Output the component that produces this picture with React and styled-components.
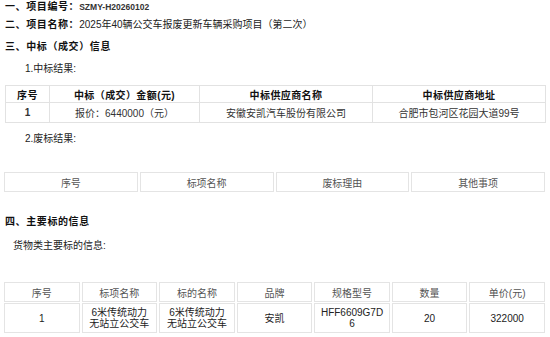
import React from "react";
import styled, { createGlobalStyle } from "styled-components";

const Global = createGlobalStyle`
  html, body { margin: 0; padding: 0; background: #fff; }
  body { font-family: "Liberation Sans", "Noto Sans CJK SC", sans-serif; font-size: 10px; color: #333; }
`;

const Page = styled.div`
  width: 550px;
  height: 337px;
  overflow: hidden;
  padding: 0 0 0 5px;
  box-sizing: border-box;
`;

const Line = styled.div`
  height: ${(p) => p.$h || 22}px;
  line-height: ${(p) => p.$h || 22}px;
  margin-top: ${(p) => p.$mt || 0}px;
  padding-left: ${(p) => p.$indent || 0}px;
  white-space: nowrap;
  color: #222;
`;

const Label = styled.span`
  font-weight: 700;
  color: #111;
  letter-spacing: 0.6px;
`;

const Code = styled.span`
  font-size: 8.5px;
  font-weight: 700;
  color: #333;
`;

const Table1 = styled.table`
  margin-top: 5px;
  width: 540px;
  table-layout: fixed;
  border-collapse: collapse;
  td, th {
    border: 1px solid #e2e2e2;
    text-align: center;
    padding: 0;
    font-size: 10px;
  }
  th { height: 16px; font-weight: 700; color: #111; letter-spacing: 0.4px; }
  td { height: 19px; color: #333; }
`;

const Grid = styled.table`
  margin-top: ${(p) => p.$mt}px;
  margin-left: -3px;
  width: 545px;
  table-layout: fixed;
  border-collapse: separate;
  border-spacing: 2px 1px;
  td {
    border: 1px solid #e4e4e4;
    text-align: center;
    padding: 0;
    font-size: 10px;
    color: #555;
  }
`;

const HeadCell = styled.td`
  height: 18px;
`;

const BodyCell = styled.td`
  height: 28px;
  line-height: 11px;
  && { color: #222; }
`;

export default function App() {
  return (
    <Page>
      <Global />
      <Line $h={14}>
        <Label>一、项目编号：</Label>
        <Code>SZMY-H20260102</Code>
      </Line>
      <Line>
        <Label>二、项目名称：</Label>2025年40辆公交车报废更新车辆采购项目（第二次）
      </Line>
      <Line>
        <Label>三、中标（成交）信息</Label>
      </Line>
      <Line $indent={20}>1.中标结果:</Line>
      <Table1>
        <colgroup>
          <col style={{ width: 44 }} />
          <col style={{ width: 150 }} />
          <col style={{ width: 173 }} />
          <col style={{ width: 173 }} />
        </colgroup>
        <thead>
          <tr>
            <th>序号</th>
            <th>中标（成交）金额(元)</th>
            <th>中标供应商名称</th>
            <th>中标供应商地址</th>
          </tr>
        </thead>
        <tbody>
          <tr>
            <td><b>1</b></td>
            <td>报价：6440000（元）</td>
            <td>安徽安凯汽车股份有限公司</td>
            <td>合肥市包河区花园大道99号</td>
          </tr>
        </tbody>
      </Table1>
      <Line $mt={5} $indent={20}>2.废标结果:</Line>
      <Grid $mt={21}>
        <tbody>
          <tr>
            <HeadCell>序号</HeadCell>
            <HeadCell>标项名称</HeadCell>
            <HeadCell>废标理由</HeadCell>
            <HeadCell>其他事项</HeadCell>
          </tr>
        </tbody>
      </Grid>
      <Line $mt={18}>
        <Label>四、主要标的信息</Label>
      </Line>
      <Line $mt={2} $indent={8}>货物类主要标的信息:</Line>
      <Grid $mt={24}>
        <tbody>
          <tr>
            <HeadCell>序号</HeadCell>
            <HeadCell>标项名称</HeadCell>
            <HeadCell>标的名称</HeadCell>
            <HeadCell>品牌</HeadCell>
            <HeadCell>规格型号</HeadCell>
            <HeadCell>数量</HeadCell>
            <HeadCell>单价(元)</HeadCell>
          </tr>
          <tr>
            <BodyCell>1</BodyCell>
            <BodyCell>6米传统动力<br />无站立公交车</BodyCell>
            <BodyCell>6米传统动力<br />无站立公交车</BodyCell>
            <BodyCell>安凯</BodyCell>
            <BodyCell>HFF6609G7D<br />6</BodyCell>
            <BodyCell>20</BodyCell>
            <BodyCell>322000</BodyCell>
          </tr>
        </tbody>
      </Grid>
    </Page>
  );
}
